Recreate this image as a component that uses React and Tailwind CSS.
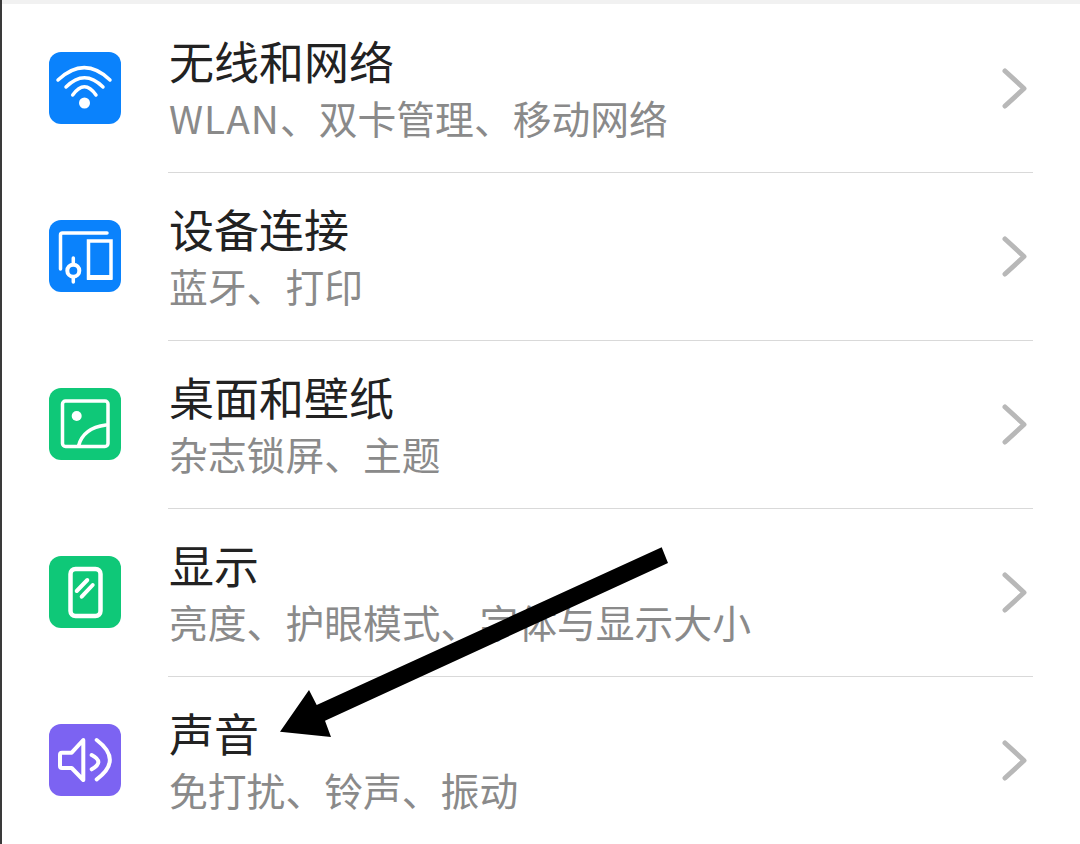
const rows = [
  { title: '无线和网络', latin: 'WLAN', sub: '、双卡管理、移动网络', color: 'bg-[#0a82fc]', icon: 'wifi' },
  { title: '设备连接', sub: '蓝牙、打印', color: 'bg-[#0a82fc]', icon: 'device' },
  { title: '桌面和壁纸', sub: '杂志锁屏、主题', color: 'bg-[#0fc878]', icon: 'wallpaper' },
  { title: '显示', sub: '亮度、护眼模式、字体与显示大小', color: 'bg-[#0fc878]', icon: 'display' },
  { title: '声音', sub: '免打扰、铃声、振动', color: 'bg-[#7c63f2]', icon: 'sound' },
];

const Glyph = ({ name }) => {
  const common = { fill: 'none', stroke: '#fff', strokeLinecap: 'round', strokeLinejoin: 'round' };
  return (
    <svg width="72" height="72" viewBox="0 0 72 72">
      {name === 'wifi' && (
        <g {...common} strokeWidth="3.5">
          <path d="M9 28Q35.5 3.4 61 28" />
          <path d="M17 35Q35.5 16.4 54 35" />
          <path d="M23.7 43Q35.5 26.4 47 43" />
          <circle cx="35.5" cy="51" r="5.5" fill="#fff" stroke="none" />
        </g>
      )}
      {name === 'device' && (
        <g {...common} strokeWidth="3.5">
          <path d="M11.5 49V15a2 2 0 0 1 2-2H58" />
          <path d="M39.5 21H62V58H39.5Z" strokeLinejoin="miter" />
          <path d="M38 57.5H63" strokeWidth="5" strokeLinecap="butt" />
          <circle cx="24.3" cy="50.7" r="6" strokeWidth="4" />
          <path d="M24.3 38V44M24.3 57V62" strokeWidth="3.5" />
        </g>
      )}
      {name === 'wallpaper' && (
        <g {...common} strokeWidth="3.5">
          <rect x="13.5" y="13" width="45.5" height="45.5" rx="3" />
          <circle cx="27.7" cy="28" r="5" fill="#fff" stroke="none" />
          <path d="M29.5 58Q34 40 57 37" />
        </g>
      )}
      {name === 'display' && (
        <g {...common} strokeWidth="4.5">
          <rect x="21.5" y="13" width="30" height="47" rx="5" />
          <path d="M27.7 35L38.3 24M32.7 40.7L43.7 29" strokeWidth="4" />
        </g>
      )}
      {name === 'sound' && (
        <g {...common} strokeWidth="4">
          <path d="M34.3 16L22.7 28.7H13a2 2 0 0 0-2 2V42a2 2 0 0 0 2 2H22.7L34.3 56Z" />
          <path d="M42.7 31Q56 38 42.7 45.3" />
          <path d="M47.7 16Q74 36 47.7 55.3" />
        </g>
      )}
    </svg>
  );
};

const Row = ({ item, last }) => (
  <div className="flex h-[168px] items-center pl-[47px]">
    <div className={`w-[72px] h-[72px] -mt-[2px] rounded-[12px] shrink-0 ${item.color}`}>
      <Glyph name={item.icon} />
    </div>
    <div className={`ml-[47px] w-[865px] h-full flex items-center justify-between border-b-[1.5px] ${last ? 'border-[#f0f0f0]' : 'border-[#d9d9d9]'}`}>
      <div className="pl-[1px]">
        <div className="text-[45px] leading-[57px] text-[#222222]">{item.title}</div>
        <div className="text-[38.8px] leading-[57px] text-[#8a8a8a] whitespace-pre">
          {item.latin && <span className="tracking-[1px]">{item.latin}</span>}
          {item.sub}
        </div>
      </div>
      <svg width="40" height="60" viewBox="0 0 40 60" className="-mt-[2px]">
        <path d="M12 13L31 30.5L12 48" fill="none" stroke="#b8b8b8" strokeWidth="5" strokeLinecap="round" strokeLinejoin="round" />
      </svg>
    </div>
  </div>
);

export default function App() {
  return (
    <div
      className="relative w-[1080px] h-[844px] overflow-hidden bg-white border-l-2 border-[#3a3a3a]"
      style={{ fontFamily: '"Noto Sans CJK SC", "Noto Sans", sans-serif' }}
    >
      <div className="h-[5px] border-t-[4px] border-[#f1f1f1]" />
      {rows.map((item, i) => (
        <Row key={item.title} item={item} last={i === rows.length - 1} />
      ))}
      {/* annotation arrow laid over the list */}
      <svg className="absolute left-[-2px] top-0" width="1080" height="844" viewBox="0 0 1080 844">
        <path d="M661.7 547.3L668 563L325 720.7L331 737L280 731.7L309 690L316.7 705Z" fill="#000" />
      </svg>
    </div>
  );
}
